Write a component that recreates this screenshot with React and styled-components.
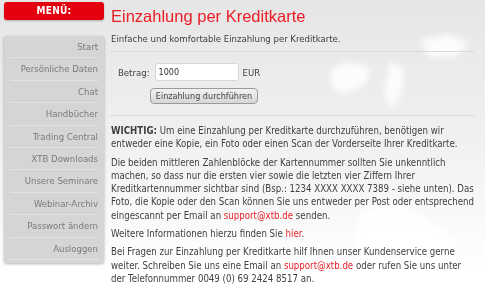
import React from 'react'
import styled, { createGlobalStyle } from 'styled-components'

const GlobalStyle = createGlobalStyle`
  html, body {
    margin: 0;
    padding: 0;
  }
  body {
    width: 485px;
    height: 301px;
    overflow: hidden;
    background: linear-gradient(180deg, #e6e6e6 0%, #f0f0f0 45%, #ffffff 90%);
    font-family: "DejaVu Sans Condensed", "DejaVu Sans", sans-serif;
    color: #404040;
  }
`

const Backdrop = styled.svg`
  position: absolute;
  left: 0;
  top: 0;
  z-index: -1;
  filter: blur(3px);
`

const Page = styled.div`
  display: flex;
  padding: 2px 0 0 4px;
  gap: 6px;
`

const Sidebar = styled.aside`
  width: 100px;
  flex-shrink: 0;
`

const MenuHeader = styled.div`
  height: 18px;
  line-height: 18px;
  background: #e3000f;
  border-radius: 3px;
  box-shadow: 0 1px 2px rgba(0, 0, 0, 0.25);
  color: #fff;
  font-weight: bold;
  font-size: 10px;
  text-align: center;
  letter-spacing: 0.3px;
  margin-bottom: 16px;
`

const NavBox = styled.nav`
  background: #d5d5d5;
  border-radius: 3px;
  box-shadow: 0 1px 3px rgba(0, 0, 0, 0.3);
  padding: 0 6px 3px;
`

const NavItem = styled.a`
  display: block;
  height: 22.4px;
  line-height: 22px;
  box-sizing: border-box;
  border-bottom: 1px solid #e4e4e4;
  text-align: right;
  white-space: nowrap;
  font-size: 9.5px;
  color: #7a7a7a;
  text-decoration: none;
`

const Main = styled.main`
  width: 364px;
`

const Title = styled.h1`
  margin: 4px 0 0 1px;
  font-family: "Liberation Sans", Arial, sans-serif;
  font-weight: normal;
  font-size: 16.5px;
  line-height: 20px;
  color: #ec1c24;
`

const Lead = styled.p`
  margin: 7px 0 0 1px;
  font-size: 9.5px;
  line-height: 12px;
`

const Rule = styled.hr`
  border: 0;
  border-top: 1px solid #dadada;
  margin: ${p => p.$top}px 0 0;
`

const FormRow = styled.div`
  display: flex;
  align-items: center;
  margin: 11px 0 0 8px;
  font-size: 9.5px;
`

const Label = styled.label`
  margin-right: 5px;
`

const Input = styled.input`
  width: 84px;
  height: 18px;
  box-sizing: border-box;
  border: 1px solid #d8d8d8;
  border-radius: 3px;
  padding: 0 3px;
  font-family: inherit;
  font-size: 9px;
  color: #333;
  background: #fff;
  margin-right: 4px;
`

const Submit = styled.button`
  display: block;
  margin: 7px 0 0 40px;
  width: 108px;
  height: 16px;
  padding: 0;
  border: 1px solid #9a9a9a;
  border-radius: 4px;
  background: linear-gradient(180deg, #f2f2f2 0%, #d6d6d6 100%);
  font-family: inherit;
  font-size: 9px;
  white-space: nowrap;
  color: #444;
`

const Para = styled.p`
  margin: ${p => p.$top}px 0 0 1px;
  font-size: 9.6px;
  line-height: 13.3px;
  white-space: nowrap;
`

const Link = styled.a`
  color: #e8202a;
  text-decoration: none;
`

const menu = [
  'Start',
  'Persönliche Daten',
  'Chat',
  'Handbücher',
  'Trading Central',
  'XTB Downloads',
  'Unsere Seminare',
  'Webinar-Archiv',
  'Passwort ändern',
  'Ausloggen',
]

export default function App() {
  return (
    <>
      <GlobalStyle />
      <Backdrop width="485" height="301" viewBox="0 0 485 301">
        <g fill="#ffffff" opacity="0.85">
          <path d="M330 70 l18 -8 l22 6 l-4 16 l-20 10 l-14 -6 z" />
          <path d="M390 62 l14 6 l-2 24 l-10 18 l-8 -16 z" />
          <path d="M420 40 l30 -6 l20 10 l-14 12 l-26 2 z" />
          <path d="M340 301 l20 -90 l40 -10 l60 40 l-40 60 z" />
          <path d="M100 301 l20 -40 l40 10 l-30 30 z" opacity="0.6" />
        </g>
      </Backdrop>
      <Page>
        <Sidebar>
          <MenuHeader>MENÜ:</MenuHeader>
          <NavBox>
            {menu.map(m => (
              <NavItem key={m} href="#">
                {m}
              </NavItem>
            ))}
          </NavBox>
        </Sidebar>
        <Main>
          <Title>Einzahlung per Kreditkarte</Title>
          <Lead>Einfache und komfortable Einzahlung per Kreditkarte.</Lead>
          <Rule $top={6} />
          <FormRow>
            <Label>Betrag:</Label>
            <Input defaultValue="1000" />
            <span>EUR</span>
          </FormRow>
          <Submit>Einzahlung durchführen</Submit>
          <Rule $top={11} />
          <Para $top={8}>
            <b>WICHTIG:</b> Um eine Einzahlung per Kreditkarte durchzuführen, benötigen wir
            <br />
            entweder eine Kopie, ein Foto oder einen Scan der Vorderseite Ihrer Kreditkarte.
          </Para>
          <Para $top={5}>
            Die beiden mittleren Zahlenblöcke der Kartennummer sollten Sie unkenntlich
            <br />
            machen, so dass nur die ersten vier sowie die letzten vier Ziffern Ihrer
            <br />
            Kreditkartennummer sichtbar sind (Bsp.: 1234 XXXX XXXX 7389 - siehe unten). Das
            <br />
            Foto, die Kopie oder den Scan können Sie uns entweder per Post oder entsprechend
            <br />
            eingescannt per Email an <Link href="#">support@xtb.de</Link> senden.
          </Para>
          <Para $top={5}>
            Weitere Informationen hierzu finden Sie <Link href="#">hier</Link>.
          </Para>
          <Para $top={5}>
            Bei Fragen zur Einzahlung per Kreditkarte hilf Ihnen unser Kundenservice gerne
            <br />
            weiter. Schreiben Sie uns eine Email an <Link href="#">support@xtb.de</Link> oder rufen Sie uns unter
            <br />
            der Telefonnummer 0049 (0) 69 2424 8517 an.
          </Para>
        </Main>
      </Page>
    </>
  )
}
